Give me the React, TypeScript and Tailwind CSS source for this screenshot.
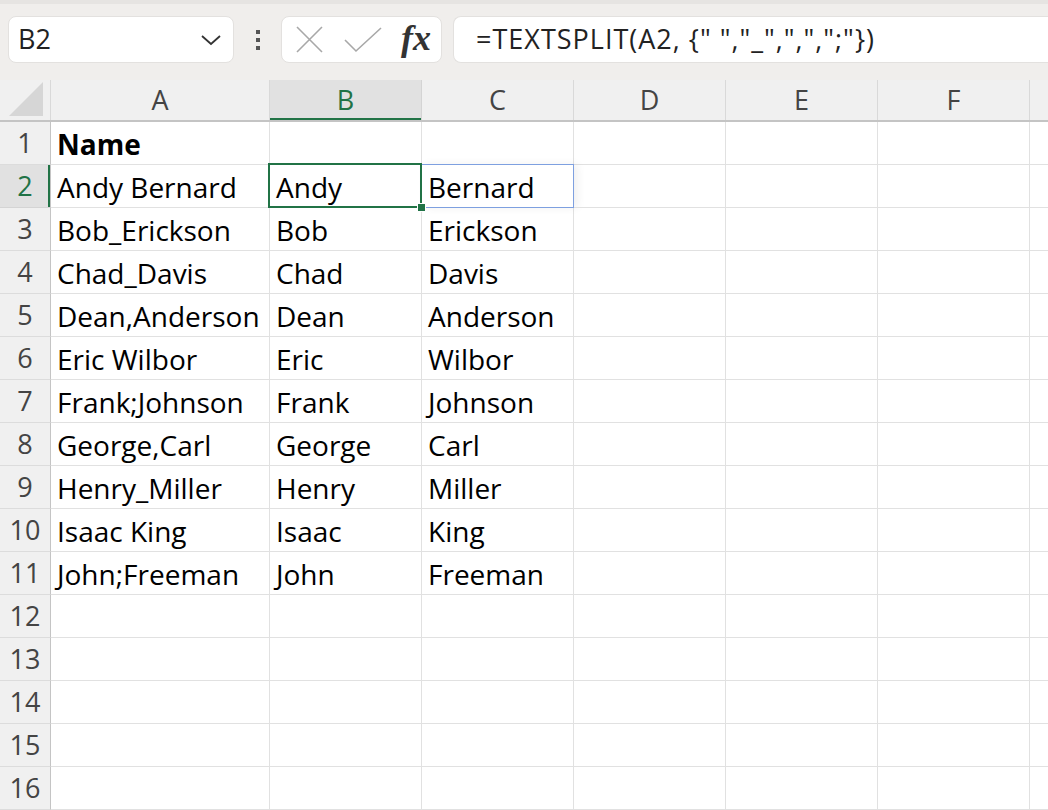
import React from "react";

const cols = ["A", "B", "C", "D", "E", "F"];
const colW = ["w-[219px]", "w-[152px]", "w-[152px]", "w-[152px]", "w-[152px]", "w-[152px]"];

const data: string[][] = [
  ["Name", "", ""],
  ["Andy Bernard", "Andy", "Bernard"],
  ["Bob_Erickson", "Bob", "Erickson"],
  ["Chad_Davis", "Chad", "Davis"],
  ["Dean,Anderson", "Dean", "Anderson"],
  ["Eric Wilbor", "Eric", "Wilbor"],
  ["Frank;Johnson", "Frank", "Johnson"],
  ["George,Carl", "George", "Carl"],
  ["Henry_Miller", "Henry", "Miller"],
  ["Isaac King", "Isaac", "King"],
  ["John;Freeman", "John", "Freeman"],
];

const font = { fontFamily: '"Open Sans", "Noto Sans", sans-serif' } as React.CSSProperties;

export default function App() {
  const rows = Array.from({ length: 16 }, (_, i) => i + 1);
  return (
    <div className="w-[1048px] h-[810px] overflow-hidden bg-white" style={font}>
      {/* Toolbar */}
      <div className="h-[80px] bg-[#f0eeec] border-t-4 border-[#e6e4e2] flex items-start pt-[12px] pl-[8px] gap-0">
        <div className="w-[226px] h-[47px] bg-white rounded-[8px] border border-[#e3e1df] flex items-center justify-between pl-[9px] pr-[11px]">
          <span className="text-[27px] text-[#222]">B2</span>
          <svg width="22" height="14" viewBox="0 0 22 14" fill="none">
            <path d="M2 3 L11 11 L20 3" stroke="#333" strokeWidth="1.8" />
          </svg>
        </div>
        <div className="w-[47px] h-[47px] flex flex-col items-center justify-center gap-[4px]">
          <div className="w-[4px] h-[4px] bg-[#555]" />
          <div className="w-[4px] h-[4px] bg-[#555]" />
          <div className="w-[4px] h-[4px] bg-[#555]" />
        </div>
        <div className="w-[161px] h-[47px] bg-white rounded-[8px] border border-[#e3e1df] flex items-center pl-[14px] pr-[10px]">
          <svg width="27" height="27" viewBox="0 0 27 27" fill="none">
            <path d="M1 1 L26 26 M26 1 L1 26" stroke="#a8a8a8" strokeWidth="1.6" />
          </svg>
          <svg className="ml-[21px]" width="38" height="26" viewBox="0 0 38 26" fill="none">
            <path d="M1 13 L12 24 L37 1" stroke="#a8a8a8" strokeWidth="1.6" />
          </svg>
          <span
            className="ml-[19px] text-[36px] italic font-bold text-[#333] leading-none -mt-[4px]"
            style={{ fontFamily: '"Liberation Serif", "DejaVu Serif", serif' }}
          >
            fx
          </span>
        </div>
        <div className="ml-[11px] flex-1 h-[47px] bg-white rounded-l-[8px] border border-r-0 border-[#e3e1df] flex items-center pl-[22px]">
          <span className="text-[27px] text-[#222] tracking-[1px] whitespace-pre">
            {'=TEXTSPLIT(A2, {" ","_",",",";"})'}
          </span>
        </div>
      </div>

      {/* Column headers */}
      <div className="flex h-[42px] bg-[#f0f0f0] border-b-2 border-[#c4c4c4]">
        <div className="w-[51px] shrink-0 relative border-r border-[#d9d9d9] flex items-end justify-end pr-[7px] pb-[4px]">
          <svg width="34" height="34" viewBox="0 0 34 34">
            <path d="M34 0 L34 34 L0 34 Z" fill="#d6d6d6" />
          </svg>
        </div>
        {cols.map((c, i) => (
          <div
            key={c}
            className={`${colW[i]} shrink-0 flex items-center justify-center text-[27px] border-r ${
              c === "B"
                ? "bg-[#e1e1e1] text-[#217346] border-[#d4d4d4] shadow-[inset_0_-2px_0_#217346]"
                : "text-[#444] border-[#d9d9d9]"
            }`}
          >
            {c}
          </div>
        ))}
        <div className="flex-1" />
      </div>

      {/* Rows */}
      {rows.map((r) => {
        const d = data[r - 1] || ["", "", ""];
        const sel = r === 2;
        return (
          <div key={r} className={`flex h-[43px] relative ${sel ? "z-10" : ""}`}>
            <div
              className={`w-[51px] shrink-0 flex items-center justify-center text-[27px] border-b border-r border-r-[#c4c4c4] ${
                sel
                  ? "bg-[#e1e1e1] text-[#217346] border-b-[#d4d4d4] shadow-[inset_-2px_0_0_#217346]"
                  : "bg-[#f0f0f0] text-[#444] border-b-[#dcdcdc]"
              }`}
            >
              {r}
            </div>
            {cols.map((c, i) => {
              const txt = i < 3 ? d[i] : "";
              return (
                <div
                  key={c}
                  className={`${colW[i]} shrink-0 relative border-r border-b border-[#e1e1e1] flex items-center pl-[6px] text-[28px] text-black whitespace-nowrap ${
                    r === 1 && i === 0 ? "font-bold" : ""
                  } ${sel && c === "B" ? "z-10" : ""}`}
                >
                  <span className="pt-[2px]">{txt}</span>
                  {sel && c === "C" && (
                    <div className="absolute -left-[1px] -top-[1px] -right-[1px] -bottom-[1px] border border-[#7ea0e0] shadow-[4px_0_8px_rgba(0,0,0,0.06)]" />
                  )}
                  {sel && c === "B" && (
                    <>
                      <div className="absolute -left-[2px] -top-[2px] -right-[1px] -bottom-[1px] border-2 border-[#217346]" />
                      <div className="absolute -right-[5px] -bottom-[5px] w-[9px] h-[9px] bg-[#217346] border border-white" />
                    </>
                  )}
                </div>
              );
            })}
            <div className="flex-1 border-b border-[#e1e1e1]" />
          </div>
        );
      })}
    </div>
  );
}
